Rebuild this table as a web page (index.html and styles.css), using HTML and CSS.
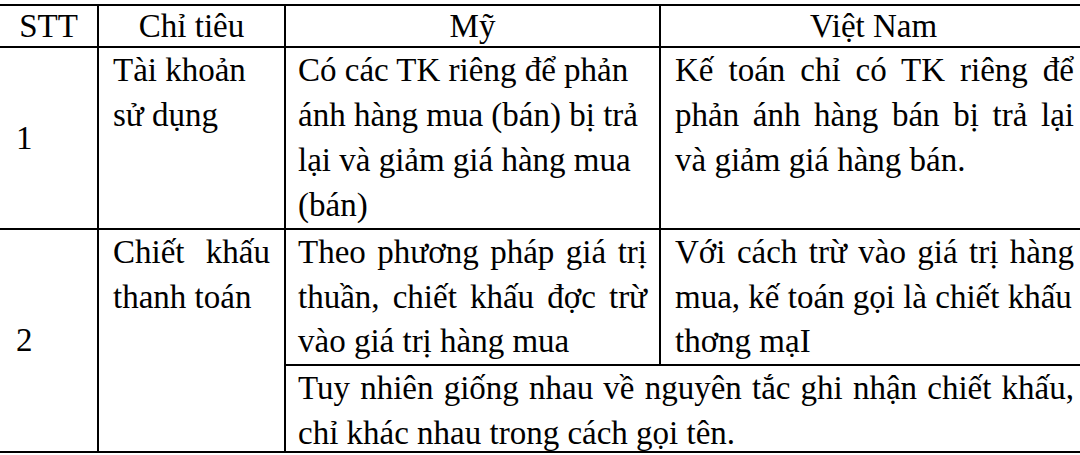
FILE: index.html
```html
<!DOCTYPE html>
<html lang="vi">
<head>
<meta charset="utf-8">
<title>So sánh Mỹ - Việt Nam</title>
<link rel="stylesheet" href="styles.css">
</head>
<body>
<table class="cmp">
  <colgroup>
    <col class="c-stt">
    <col class="c-crit">
    <col class="c-us">
    <col class="c-vn">
  </colgroup>
  <thead>
    <tr class="head">
      <th>STT</th>
      <th>Chỉ tiêu</th>
      <th>Mỹ</th>
      <th>Việt Nam</th>
    </tr>
  </thead>
  <tbody>
    <tr class="r1">
      <td class="num">1</td>
      <td class="crit"><span class="ln">Tài khoản</span><span class="ln">sử dụng</span></td>
      <td class="us"><span class="ln">Có các TK riêng để phản</span><span class="ln">ánh hàng mua (bán) bị trả</span><span class="ln">lại và giảm giá hàng mua</span><span class="ln">(bán)</span></td>
      <td class="vn"><span class="ln j">Kế toán chỉ có TK riêng để</span><span class="ln j">phản ánh hàng bán bị trả lại</span><span class="ln">và giảm giá hàng bán.</span></td>
    </tr>
    <tr class="r2a">
      <td class="num" rowspan="2">2</td>
      <td class="crit" rowspan="2"><span class="ln j">Chiết khấu</span><span class="ln">thanh toán</span></td>
      <td class="us"><span class="ln j">Theo phương pháp giá trị</span><span class="ln j">thuần, chiết khấu đợc trừ</span><span class="ln">vào giá trị hàng mua</span></td>
      <td class="vn"><span class="ln j">Với cách trừ vào giá trị hàng</span><span class="ln">mua, kế toán gọi là chiết khấu</span><span class="ln">thơng mạI</span></td>
    </tr>
    <tr class="r2b">
      <td class="us" colspan="2"><div class="clip"><span class="ln j">Tuy nhiên giống nhau về nguyên tắc ghi nhận chiết khấu,</span><span class="ln">chỉ khác nhau trong cách gọi tên.</span></div></td>
    </tr>
  </tbody>
</table>
</body>
</html>
```

FILE: styles.css
```css
html, body {
  margin: 0;
  padding: 0;
  background: #fff;
  overflow: hidden;
}

body {
  width: 1080px;
  height: 455px;
  font-family: "Liberation Serif", "Times New Roman", serif;
  font-size: 33px;
  color: #000;
}

.cmp {
  border-collapse: collapse;
  table-layout: fixed;
  width: 1088px;
  margin: 4px 0 0 -2px;
}

.c-stt { width: 99px; }
.c-crit { width: 187px; }
.c-us { width: 375px; }
.c-vn { width: 427px; }

.cmp th,
.cmp td {
  border: 2px solid #000;
  padding: 0;
}

.cmp th {
  font-weight: normal;
  text-align: center;
  height: 40px;
  line-height: 40px;
  vertical-align: middle;
}

.cmp td {
  vertical-align: top;
  line-height: 45px;
}

.ln {
  display: block;
  text-align: left;
  white-space: nowrap;
}

.ln.j {
  text-align: justify;
  text-align-last: justify;
  white-space: normal;
}

.num {
  padding-left: 16px !important;
  vertical-align: middle !important;
}

.crit {
  padding: 0 14px !important;
}

.us {
  padding: 0 12px !important;
}

.vn {
  padding: 0 12px 0 14px !important;
}

.r1 td { height: 180px; }
.r2a td { height: 134px; }
.r2a .us, .r2a .vn { line-height: 44.6px; }
.r2b td { height: 85px; }

.clip {
  height: 85px;
  overflow: hidden;
  line-height: 45px;
}
```
